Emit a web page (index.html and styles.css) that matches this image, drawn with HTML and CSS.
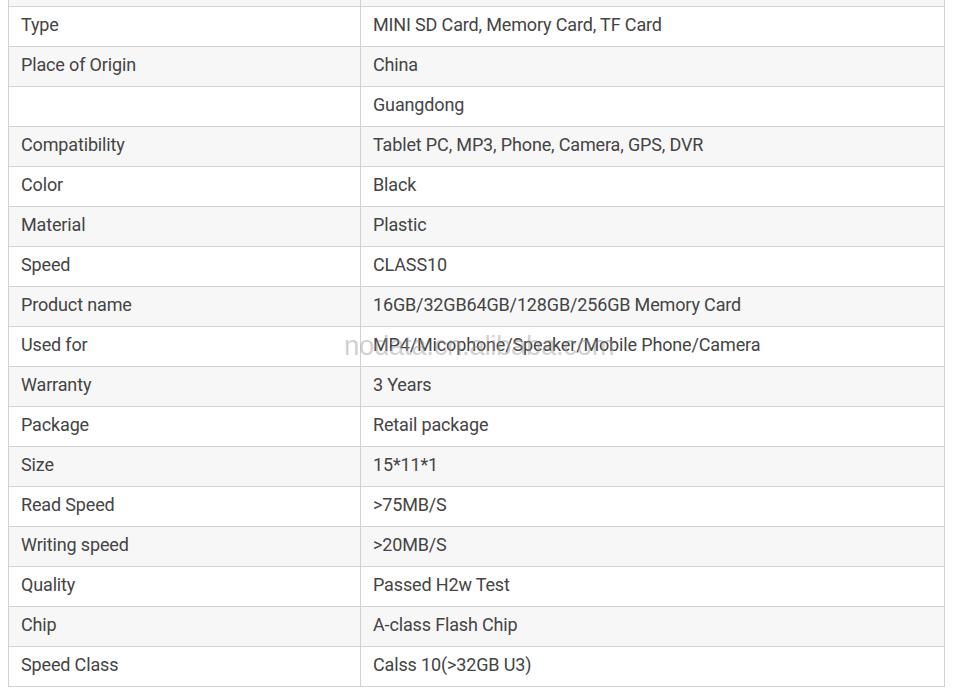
FILE: index.html
```html
<!DOCTYPE html>
<html>
<head>
<meta charset="utf-8">
<link rel="stylesheet" href="styles.css">
</head>
<body>
<div class="wrap">
<table class="spec">
<tbody>
<tr class="alt cut"><td></td><td></td></tr>
<tr><td>Type</td><td>MINI SD Card, Memory Card, TF Card</td></tr>
<tr class="alt"><td>Place of Origin</td><td>China</td></tr>
<tr><td></td><td>Guangdong</td></tr>
<tr class="alt"><td>Compatibility</td><td>Tablet PC, MP3, Phone, Camera, GPS, DVR</td></tr>
<tr><td>Color</td><td>Black</td></tr>
<tr class="alt"><td>Material</td><td>Plastic</td></tr>
<tr><td>Speed</td><td>CLASS10</td></tr>
<tr class="alt"><td>Product name</td><td>16GB/32GB64GB/128GB/256GB Memory Card</td></tr>
<tr><td>Used for</td><td>MP4/Micophone/Speaker/Mobile Phone/Camera</td></tr>
<tr class="alt"><td>Warranty</td><td>3 Years</td></tr>
<tr><td>Package</td><td>Retail package</td></tr>
<tr class="alt"><td>Size</td><td>15*11*1</td></tr>
<tr><td>Read Speed</td><td>&gt;75MB/S</td></tr>
<tr class="alt"><td>Writing speed</td><td>&gt;20MB/S</td></tr>
<tr><td>Quality</td><td>Passed H2w Test</td></tr>
<tr class="alt"><td>Chip</td><td>A-class Flash Chip</td></tr>
<tr><td>Speed Class</td><td>Calss 10(&gt;32GB U3)</td></tr>
</tbody>
</table>
<div class="watermark">nodata.cn.alibaba.com</div>
</div>
</body>
</html>
```
FILE: styles.css
```css
html, body {
  margin: 0;
  padding: 0;
  background: #fff;
  overflow: hidden;
}
.wrap {
  position: relative;
  padding-left: 8px;
  width: 957px;
  height: 690px;
  overflow: hidden;
}
.spec {
  border-collapse: collapse;
  width: 937px;
  margin-top: -34px;
  font-family: Roboto, "Liberation Sans", sans-serif;
  font-size: 18px;
  letter-spacing: -0.15px;
  color: #444;
}
.spec td {
  border: 1px solid #d2d2d2;
  height: 40px;
  padding: 0 12px 3px;
  box-sizing: border-box;
  vertical-align: middle;
  line-height: 20px;
}
.spec td:first-child {
  width: 352px;
}
.spec tr.alt td {
  background: #f7f7f7;
}
.watermark {
  position: absolute;
  left: 344px;
  top: 330px;
  font-family: "Liberation Sans", Arial, sans-serif;
  font-size: 27.5px;
  color: rgba(150, 150, 150, 0.45);
  letter-spacing: -0.3px;
  pointer-events: none;
}
```
